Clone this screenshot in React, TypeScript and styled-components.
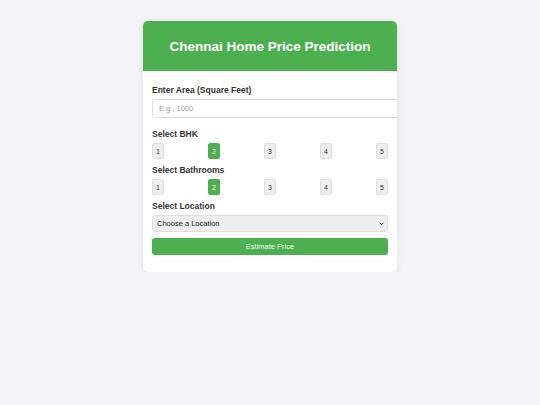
import React, { useState } from 'react';
import styled, { createGlobalStyle } from 'styled-components';

const GlobalStyle = createGlobalStyle`
  body {
    margin: 0;
    background: #f4f4f8;
    font-family: "Liberation Sans", Arial, sans-serif;
  }
`;

// --- Styled Components ---
const Page = styled.div`
  display: flex;
  justify-content: center;
  padding-top: 21px;
`;

const Card = styled.div`
  width: 254px;
  background: #fff;
  border-radius: 5px;
  overflow: hidden;
  box-shadow: 0 1px 6px rgba(0, 0, 0, 0.1);
`;

const Header = styled.div`
  background: #4caf50;
  height: 50px;
  display: flex;
  align-items: center;
  justify-content: center;
`;

const Title = styled.h1`
  margin: 0;
  color: #fff;
  font-size: 13.5px;
  font-weight: bold;
`;

const Body = styled.div`
  padding: 14px 9px 17px;
  display: flex;
  flex-direction: column;
`;

const Label = styled.label<{ gap?: number }>`
  display: block;
  font-size: 8.5px;
  font-weight: bold;
  color: #333;
  line-height: 10px;
  margin-top: ${p => p.gap ?? 0}px;
  margin-bottom: 4px;
`;

const Input = styled.input`
  width: 100%;
  height: 17px;
  padding: 0 6px;
  border: 1px solid #ddd;
  border-radius: 3px;
  font-size: 7.5px;
  font-family: inherit;
  color: #333;
  &::placeholder {
    color: #999;
  }
`;

const Choices = styled.div`
  display: flex;
  justify-content: space-between;
`;

const Choice = styled.button<{ active: boolean }>`
  width: 12px;
  height: 16px;
  padding: 0;
  border: 1px solid ${p => (p.active ? '#4caf50' : '#ddd')};
  border-radius: 2px;
  background: ${p => (p.active ? '#4caf50' : '#eee')};
  color: ${p => (p.active ? '#fff' : '#333')};
  font-size: 7px;
  font-family: inherit;
  cursor: pointer;
`;

const SelectWrap = styled.div`
  position: relative;
`;

const Select = styled.select`
  display: block;
  width: 100%;
  height: 17px;
  padding: 0 4px;
  border: 1px solid #ddd;
  border-radius: 3px;
  background: #eee;
  font-size: 7.5px;
  font-family: inherit;
  color: #222;
  appearance: none;
`;

const Chevron = styled.svg`
  position: absolute;
  right: 4px;
  top: 7px;
  width: 5px;
  height: 4px;
  pointer-events: none;
`;

const Submit = styled.button`
  margin-top: 6px;
  width: 100%;
  height: 17px;
  border: none;
  border-radius: 3px;
  background: #4caf50;
  color: #f4fff4;
  font-size: 7.5px;
  font-family: inherit;
  cursor: pointer;
`;

const options = [1, 2, 3, 4, 5];

// --- Main Component ---
export default function App() {
  const [area, setArea] = useState('');
  const [bhk, setBhk] = useState(2);
  const [bath, setBath] = useState(2);

  return (
    <>
      <GlobalStyle />
      <Page>
        <Card>
          <Header>
            <Title>Chennai Home Price Prediction</Title>
          </Header>
          <Body>
            <Label>Enter Area (Square Feet)</Label>
            <Input
              placeholder="E.g., 1000"
              value={area}
              onChange={e => setArea(e.target.value)}
            />

            <Label gap={11}>Select BHK</Label>
            <Choices>
              {options.map(n => (
                <Choice key={n} active={bhk === n} onClick={() => setBhk(n)}>
                  {n}
                </Choice>
              ))}
            </Choices>

            <Label gap={6}>Select Bathrooms</Label>
            <Choices>
              {options.map(n => (
                <Choice key={n} active={bath === n} onClick={() => setBath(n)}>
                  {n}
                </Choice>
              ))}
            </Choices>

            <Label gap={6}>Select Location</Label>
            <SelectWrap>
              <Select defaultValue="">
                <option value="">Choose a Location</option>
              </Select>
              <Chevron viewBox="0 0 10 8">
                <path d="M1 1.5 L5 5.5 L9 1.5" fill="none" stroke="#222" strokeWidth="2" />
              </Chevron>
            </SelectWrap>
            <Submit>Estimate Price</Submit>
          </Body>
        </Card>
      </Page>
    </>
  );
}
